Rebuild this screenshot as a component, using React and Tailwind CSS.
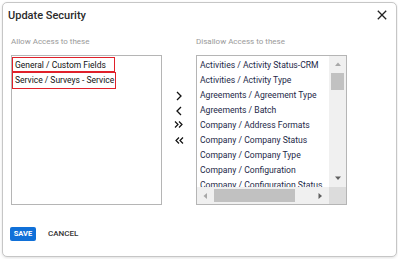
import React from "react";

const rightItems = [
  "Activities / Activity Status-CRM",
  "Activities / Activity Type",
  "Agreements / Agreement Type",
  "Agreements / Batch",
  "Company / Address Formats",
  "Company / Company Status",
  "Company / Company Type",
  "Company / Configuration",
  "Company / Configuration Status",
];

function Tri({ dir, color }) {
  const pts = {
    up: "0,4 3,0.5 6,4",
    down: "0,0.5 3,4 6,0.5",
    left: "4,0 0.5,3 4,6",
    right: "0.5,0 4,3 0.5,6",
  }[dir];
  const w = dir === "up" || dir === "down" ? 6 : 4.5;
  const h = dir === "up" || dir === "down" ? 4.5 : 6;
  return (
    <svg width={w} height={h} viewBox={`0 0 ${w} ${h}`}>
      <polygon points={pts} fill={color} />
    </svg>
  );
}

export default function App() {
  return (
    <div
      className="w-[398px] h-[259px] bg-white overflow-hidden pt-[2px] pl-[2px]"
      style={{ fontFamily: "Roboto, 'Liberation Sans', sans-serif" }}
    >
      <div className="w-[395px] h-[255px] border border-[#c6c6c6] rounded-[5px] bg-white shadow-[0_1px_3px_rgba(0,0,0,0.12)] flex flex-col">
        {/* Title */}
        <div className="mt-[6px] h-[14px] flex justify-between pl-[5px] pr-[9px]">
          <div className="text-[11px] leading-[14px] font-medium text-[#2b2b2b]">Update Security</div>
          <svg width="10" height="10" viewBox="0 0 10 10" className="mt-[1px]">
            <path d="M0.8 0.8 L9.2 9.2 M9.2 0.8 L0.8 9.2" stroke="#222" strokeWidth="1.3" fill="none" />
          </svg>
        </div>

        {/* Body */}
        <div className="mt-[14px] flex pl-[8px]">
          {/* Left column */}
          <div className="w-[151px] flex flex-col">
            <div className="h-[9px] text-[8px] leading-[9px] text-[#9a9a9a]">Allow Access to these</div>
            <div className="mt-[9px] h-[150px] border border-[#b5b5b5] bg-white flex flex-col">
              <div className="mt-[1px] w-[103px] h-[15px] border border-[#e0202a] pl-[2px] pt-[1px] text-[8.5px] leading-[13px] text-[#111] whitespace-nowrap">
                General / Custom Fields
              </div>
              <div className="w-[104px] h-[17px] border border-[#e0202a] pl-[2px] pt-[1px] text-[8.5px] leading-[13px] text-[#111] whitespace-nowrap">
                Service / Surveys - Service
              </div>
            </div>
          </div>

          {/* Arrow column */}
          <div className="w-[34px] flex flex-col items-center">
            <svg width="10" height="10" viewBox="0 0 10 10" className="mt-[54px]">
              <polyline points="3,1 7,5 3,9" stroke="#111" strokeWidth="1.3" fill="none" />
            </svg>
            <svg width="10" height="10" viewBox="0 0 10 10" className="mt-[5px]">
              <polyline points="7,1 3,5 7,9" stroke="#111" strokeWidth="1.3" fill="none" />
            </svg>
            <svg width="10" height="7" viewBox="0 0 10 7" className="mt-[5px]">
              <polyline points="1,0.5 4,3.5 1,6.5" stroke="#111" strokeWidth="1.2" fill="none" />
              <polyline points="5,0.5 8,3.5 5,6.5" stroke="#111" strokeWidth="1.2" fill="none" />
            </svg>
            <svg width="10" height="7" viewBox="0 0 10 7" className="mt-[9px]">
              <polyline points="5,0.5 2,3.5 5,6.5" stroke="#111" strokeWidth="1.2" fill="none" />
              <polyline points="9,0.5 6,3.5 9,6.5" stroke="#111" strokeWidth="1.2" fill="none" />
            </svg>
          </div>

          {/* Right column */}
          <div className="w-[151px] flex flex-col">
            <div className="h-[9px] text-[8px] leading-[9px] text-[#9a9a9a]">Disallow Access to these</div>
            <div className="mt-[9px] h-[150px] border border-[#b5b5b5] bg-white flex flex-col">
              <div className="flex h-[131px]">
                <div className="flex-1 overflow-hidden flex flex-col pt-[2px]">
                  {rightItems.map((t) => (
                    <div key={t} className="h-[15px] shrink-0 pl-[3px] text-[8.6px] leading-[15px] text-[#1d2848] whitespace-nowrap">
                      {t}
                    </div>
                  ))}
                </div>
                <div className="w-[17px] bg-[#f0f0f0] flex flex-col">
                  <div className="h-[17px] flex items-center justify-center">
                    <Tri dir="up" color="#a8a8a8" />
                  </div>
                  <div className="mx-[2px] h-[17px] bg-[#c1c1c1]" />
                  <div className="flex-1" />
                  <div className="h-[17px] flex items-center justify-center">
                    <Tri dir="down" color="#606060" />
                  </div>
                </div>
              </div>
              <div className="flex h-[17px]">
                <div className="flex-1 bg-[#f0f0f0] flex items-center">
                  <div className="w-[17px] h-full flex items-center justify-center">
                    <Tri dir="left" color="#a8a8a8" />
                  </div>
                  <div className="w-[81px] h-[13px] bg-[#c1c1c1]" />
                  <div className="flex-1" />
                  <div className="w-[17px] h-full flex items-center justify-center">
                    <Tri dir="right" color="#606060" />
                  </div>
                </div>
                <div className="w-[17px] bg-[#dcdcdc]" />
              </div>
            </div>
          </div>
        </div>

        {/* Buttons */}
        <div className="mt-[22px] pl-[7px] flex items-center">
          <div className="w-[26px] h-[14px] rounded-[2px] bg-[#1070d8] text-white text-[7.5px] font-bold flex items-center justify-center">
            SAVE
          </div>
          <div className="ml-[12px] text-[8px] font-medium text-[#333]">CANCEL</div>
        </div>
      </div>
    </div>
  );
}
